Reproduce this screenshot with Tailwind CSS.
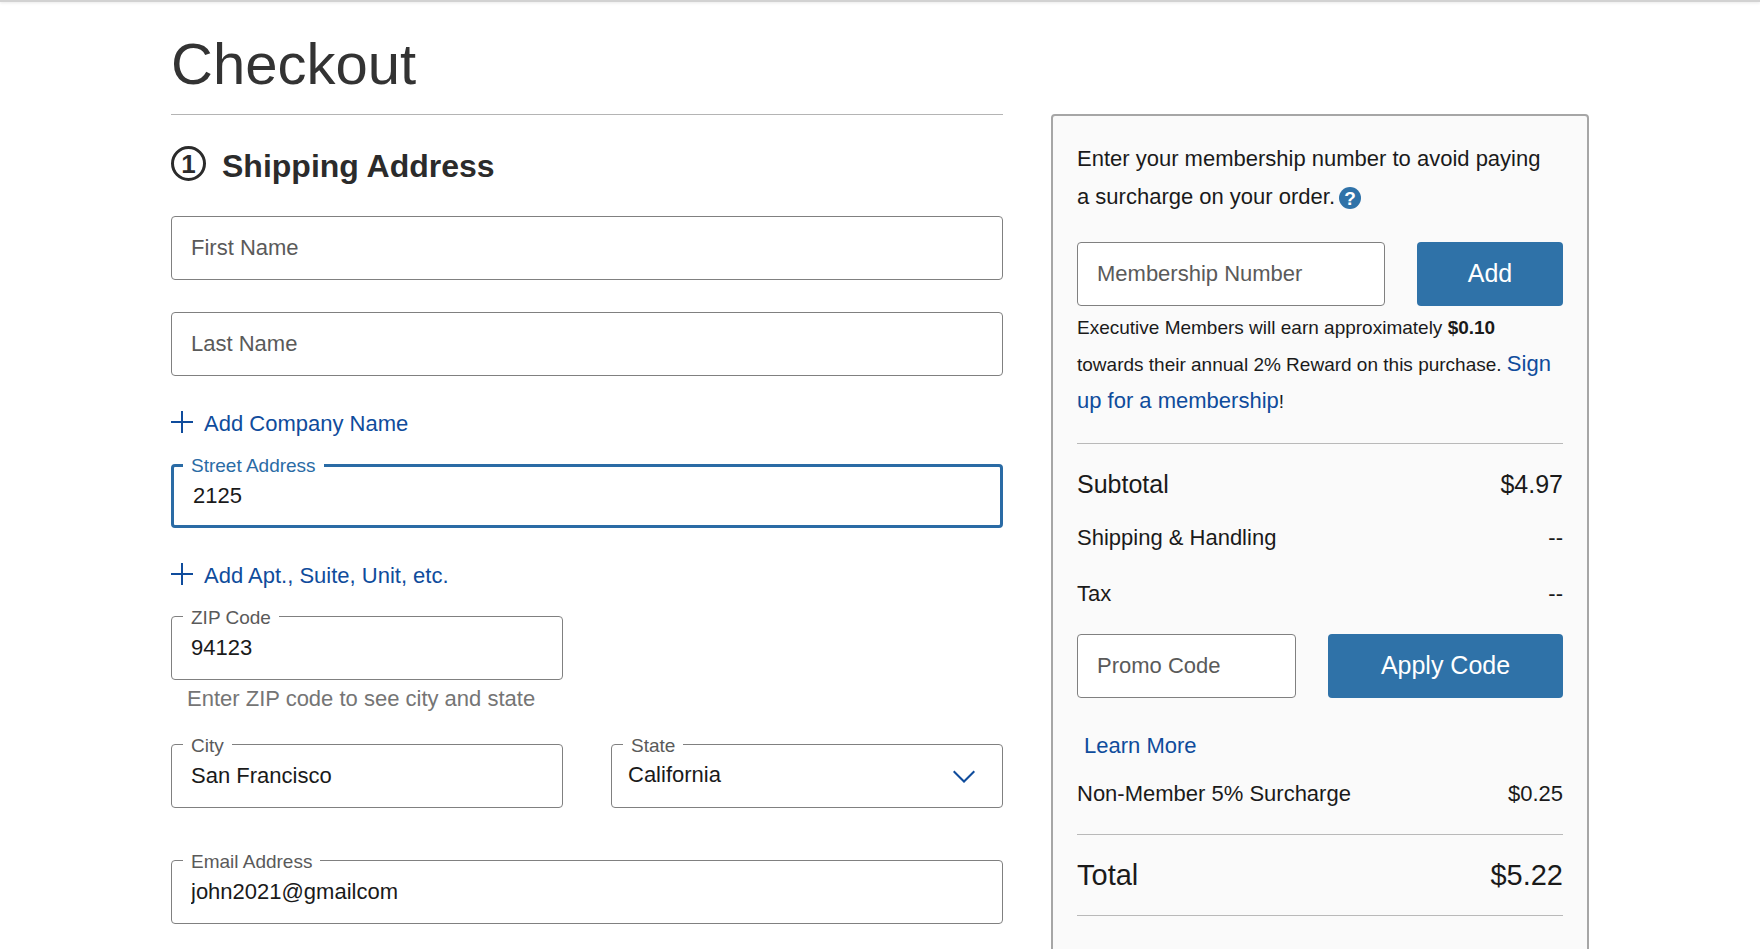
<!DOCTYPE html>
<html lang="en">
  <head>
    <meta charset="UTF-8" />
    <meta name="viewport" content="width=device-width, initial-scale=1.0" />
    <title>Checkout</title>
    <script src="https://cdn.jsdelivr.net/npm/@tailwindcss/browser@4"></script>
  </head>

  <body class="bg-white font-['Liberation_Sans',Arial,sans-serif] text-[22px] text-[#1a1a1a]">
    <header class="h-[2px] bg-[#d2d2d2] shadow-sm"></header>

    <div class="mx-auto grid max-w-[1466px] grid-cols-1 gap-x-12 px-6 xl:grid-cols-[minmax(0,1fr)_538px]">
      <h1 class="pt-[30px] pb-[18px] text-[58px] leading-[64px] text-[#333333]">Checkout</h1>

      <!-- Shipping form -->
      <main class="border-t border-[#b4b4b4] pb-20 xl:col-start-1">
        <form>
          <div class="flex gap-4 pt-[31px]">
            <span class="flex size-[35px] items-center justify-center rounded-full border-[3px] border-[#2b2b2b] text-[26px] leading-none font-bold text-[#2b2b2b]">1</span>
            <h2 class="text-[32px] leading-10 font-bold text-[#2b2b2b]">Shipping Address</h2>
          </div>

          <input
            type="text"
            aria-label="First Name"
            placeholder="First Name"
            class="mt-[30px] block h-16 w-full rounded-[4px] border border-[#808080] bg-white px-[19px] placeholder:text-[#5a5a5a]"
          />
          <input
            type="text"
            aria-label="Last Name"
            placeholder="Last Name"
            class="mt-8 block h-16 w-full rounded-[4px] border border-[#808080] bg-white px-[19px] placeholder:text-[#5a5a5a]"
          />

          <a href="#" class="mt-7 flex w-fit items-center gap-[11px] leading-10 text-[#0f4c9c]">
            <svg class="mb-1 size-[22px]" viewBox="0 0 22 22" fill="none" stroke="currentColor" stroke-width="2">
              <path d="M0 11h22M11 0v22" />
            </svg>
            Add Company Name
          </a>

          <div class="relative mt-5">
            <label for="street" class="absolute -top-2 left-3 bg-white px-2 text-[19px] leading-5 text-[#2a6ba5]">Street Address</label>
            <input
              id="street"
              type="text"
              value="2125"
              class="block h-16 w-full rounded-[4px] border-[3px] border-[#2a6ba5] bg-white px-[19px] outline-none"
            />
          </div>

          <a href="#" class="mt-7 flex w-fit items-center gap-[11px] leading-10 text-[#0f4c9c]">
            <svg class="mb-1 size-[22px]" viewBox="0 0 22 22" fill="none" stroke="currentColor" stroke-width="2">
              <path d="M0 11h22M11 0v22" />
            </svg>
            Add Apt., Suite, Unit, etc.
          </a>

          <div class="mt-5 grid grid-cols-2 gap-x-12">
            <div>
              <div class="relative">
                <label for="zip" class="absolute -top-2 left-3 bg-white px-2 text-[19px] leading-5 text-[#5a5a5a]">ZIP Code</label>
                <input
                  id="zip"
                  type="text"
                  value="94123"
                  class="block h-16 w-full rounded-[4px] border border-[#808080] bg-white px-[19px]"
                />
              </div>
              <p class="pl-4 leading-[38px] whitespace-nowrap text-[#757575]">Enter ZIP code to see city and state</p>
            </div>
          </div>

          <div class="mt-[26px] grid grid-cols-2 gap-x-12">
            <div class="relative">
              <label for="city" class="absolute -top-2 left-3 bg-white px-2 text-[19px] leading-5 text-[#5a5a5a]">City</label>
              <input
                id="city"
                type="text"
                value="San Francisco"
                class="block h-16 w-full rounded-[4px] border border-[#808080] bg-white px-[19px]"
              />
            </div>
            <div class="relative">
              <label for="state" class="absolute -top-2 left-3 bg-white px-2 text-[19px] leading-5 text-[#5a5a5a]">State</label>
              <select
                id="state"
                class="block h-16 w-full appearance-none rounded-[4px] border border-[#808080] bg-white px-4 pb-1"
              >
                <option>California</option>
                <option>Oregon</option>
                <option>Washington</option>
              </select>
              <svg
                class="pointer-events-none absolute top-[26px] right-7 h-[13px] w-[22px] text-[#0f4c9c]"
                viewBox="0 0 22 13"
                fill="none"
                stroke="currentColor"
                stroke-width="2"
              >
                <path d="M.7 1.2 11 11.5 21.3 1.2" />
              </svg>
            </div>
          </div>

          <div class="relative mt-[52px]">
            <label for="email" class="absolute -top-2 left-3 bg-white px-2 text-[19px] leading-5 text-[#5a5a5a]">Email Address</label>
            <input
              id="email"
              type="text"
              value="john2021@gmailcom"
              class="block h-16 w-full rounded-[4px] border border-[#808080] bg-white px-[19px]"
            />
          </div>
        </form>
      </main>

      <!-- Order summary -->
      <aside class="rounded-[4px] border-2 border-[#a6a6a6] bg-[#fafafa] px-6 pt-6 pb-20">
        <p class="pr-3 leading-[38px]">
          Enter your membership number to avoid paying a surcharge on your
          order.<button type="button" aria-label="Membership help" class="ml-1 inline-flex size-[22px] items-center justify-center rounded-full bg-[#2f72a8] align-middle text-[19px] leading-none font-bold text-white">?</button>
        </p>

        <div class="mt-[26px] flex gap-8">
          <input
            type="text"
            aria-label="Membership Number"
            placeholder="Membership Number"
            class="h-16 min-w-0 flex-1 rounded-[4px] border border-[#808080] bg-white px-[19px] placeholder:text-[#5a5a5a]"
          />
          <button type="button" class="h-16 w-[146px] rounded-[4px] bg-[#2f72a8] text-[25px] text-white">Add</button>
        </div>

        <p class="mt-1 text-[19px] leading-9">
          Executive Members will earn approximately <strong>$0.10</strong>
          towards their annual 2% Reward on this purchase.
          <a href="#" class="text-[22px] text-[#0f4c9c]">Sign up for a membership</a>!
        </p>

        <hr class="mt-[23px] border-[#b9b9b9]" />

        <div class="mt-6 flex justify-between text-[25px] leading-8">
          <span>Subtotal</span>
          <span>$4.97</span>
        </div>
        <div class="mt-[22px] flex justify-between leading-8">
          <span>Shipping &amp; Handling</span>
          <span>--</span>
        </div>
        <div class="mt-6 flex justify-between leading-8">
          <span>Tax</span>
          <span>--</span>
        </div>

        <div class="mt-6 flex gap-8">
          <input
            type="text"
            aria-label="Promo Code"
            placeholder="Promo Code"
            class="h-16 min-w-0 flex-1 rounded-[4px] border border-[#808080] bg-white px-[19px] placeholder:text-[#5a5a5a]"
          />
          <button type="button" class="h-16 w-[235px] rounded-[4px] bg-[#2f72a8] text-[25px] text-white">Apply Code</button>
        </div>

        <a href="#" class="mt-8 block w-fit pl-[7px] leading-8 text-[#0f4c9c]">Learn More</a>
        <div class="mt-4 flex justify-between leading-8">
          <span>Non-Member 5% Surcharge</span>
          <span>$0.25</span>
        </div>

        <hr class="mt-6 border-[#b9b9b9]" />
        <div class="my-6 flex justify-between text-[29px] leading-8">
          <span>Total</span>
          <span>$5.22</span>
        </div>
        <hr class="border-[#b9b9b9]" />
      </aside>
    </div>
  </body>
</html>
